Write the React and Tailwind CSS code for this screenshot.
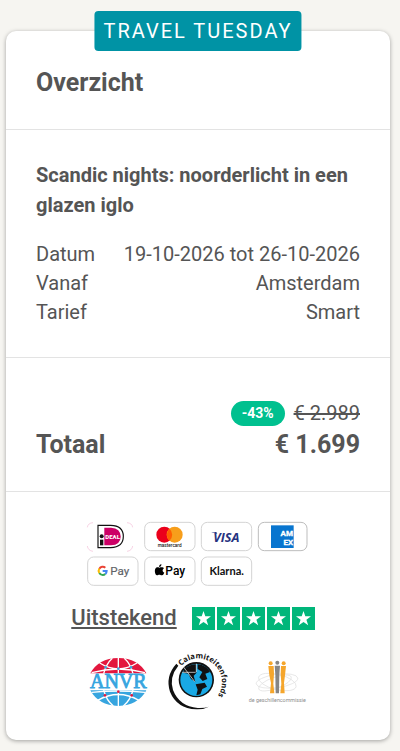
const payText = { fontFamily: 'Roboto, sans-serif' };

function Card({ viewBox, label, children }) {
  return (
    <svg viewBox={viewBox} role="img" aria-label={label} className="block h-[29px] w-[51px] overflow-visible">
      {children}
    </svg>
  );
}

function CardFrame({ x, y, width = 151, stroke = '#d4d4d4' }) {
  return <rect x={x} y={y} width={width} height="85" rx="18" fill="#fff" stroke={stroke} strokeWidth="3" />;
}

function PaymentMethods() {
  return (
    <div className="grid grid-cols-[repeat(4,51px)] justify-center gap-1.5">
      <Card viewBox="21 21 153 87" label="iDEAL">
        <g fill="none" stroke="#f3bdd6" strokeWidth="2">
          <path d="M22 37Q24 24 39 23M141 23Q156 24 158 37M22 93Q24 107 39 109M141 109Q156 107 158 93" />
        </g>
        <path d="M54 31H92Q130 32 130 64Q130 97 92 98H54Z" fill="#fff" stroke="#111" strokeWidth="3.5" />
        <path d="M73 38H93Q122 40 122 65Q122 89 93 91H73Z" fill="#cc0066" />
        <circle cx="65" cy="64" r="6" fill="#111" />
        <path d="M60 74H70V91H60Z" fill="#111" />
        <text x="76" y="71" fontSize="18" fontWeight="800" fill="#fff" style={payText}>DEAL</text>
      </Card>
      <Card viewBox="192 21 153 87" label="Mastercard">
        <CardFrame x="194" y="22" />
        <circle cx="253" cy="59" r="24" fill="#eb001b" />
        <circle cx="284" cy="59" r="24" fill="#f79e1b" />
        <path d="M268.500 41A24 24 0 0 1 268.500 77A24 24 0 0 1 268.500 41Z" fill="#ff5f00" />
        <text x="269" y="95" fontSize="14" fontWeight="500" textAnchor="middle" fill="#222" style={payText}>mastercard</text>
      </Card>
      <Card viewBox="18 21 153 87" label="Visa">
        <CardFrame x="19" y="22" />
        <text x="94" y="80" fontSize="38" fontWeight="700" fontStyle="italic" textAnchor="middle" fill="#26337f" style={{ fontFamily: '"Open Sans", sans-serif' }}>VISA</text>
        <path d="M50 51H64L67 57Q60 52 50 52Z" fill="#26337f" />
      </Card>
      <Card viewBox="187 21 153 87" label="American Express">
        <CardFrame x="188" y="22" width={146} stroke="#bdbdbd" />
        <path d="M226 31H294V99H226Z" fill="#0875cf" />
        <g fill="#fff" stroke="#fff" strokeWidth="1" fontSize="24" fontWeight="700" style={payText}>
          <text x="292" y="62" textAnchor="end">AM</text>
          <text x="292" y="89" textAnchor="end">EX</text>
        </g>
      </Card>
      <Card viewBox="21 125 153 87" label="Google Pay">
        <CardFrame x="23" y="125" />
        <g fill="none" strokeWidth="6">
          <path d="M76 157A12 12 0 0 0 58 160" stroke="#ea4335" />
          <path d="M58 160A12 12 0 0 0 58 173" stroke="#fbbc04" />
          <path d="M58 173A12 12 0 0 0 76 176" stroke="#34a853" />
          <path d="M76 176Q80 172 80 167H68" stroke="#4285f4" />
        </g>
        <text x="91" y="179" fontSize="35" fill="#5f6368" stroke="#5f6368" strokeWidth="0.5" style={payText}>Pay</text>
      </Card>
      <Card viewBox="192 125 153 87" label="Apple Pay">
        <CardFrame x="194" y="125" />
        <path d="M238 157C242 157 243 155 247 156Q250 156 252 159C246 163 247 170 253 172Q250 180 245 180C242 180 241 178 238 178C235 178 234 180 231 180C225 178 223 166 226 160C229 155 234 155 238 157ZM237 155Q237 147 244 146Q245 154 237 155Z" fill="#000" />
        <text x="256" y="179" fontSize="36" fontWeight="500" fill="#000" style={payText}>Pay</text>
      </Card>
      <Card viewBox="18 125 153 87" label="Klarna">
        <CardFrame x="19" y="125" />
        <text x="95" y="180" fontSize="33" fontWeight="700" textAnchor="middle" fill="#111" style={{ fontFamily: 'Lato, sans-serif' }}>Klarna.</text>
      </Card>
    </div>
  );
}

function Star() {
  return (
    <svg viewBox="0 0 23 23" className="size-[23px] bg-[#00b67a]" aria-hidden="true">
      <path d="M11.500 4L13.300 9.300H19L14.400 12.700L16.200 18.300L11.500 14.900L6.800 18.300L8.600 12.700L4 9.300H9.700Z" fill="#fff" />
    </svg>
  );
}

function AnvrLogo() {
  return (
    <svg viewBox="27 21 180 168" className="h-14 w-[60px] overflow-visible" role="img" aria-label="ANVR">
      <path d="M34 79Q58 34 118 33Q178 34 202 79Z" fill="#e3173e" />
      <path d="M34 130H202Q178 175 118 177Q58 175 34 130Z" fill="#37a5df" />
      <g fill="none" stroke="#fff" strokeWidth="4">
        <path d="M118 33V80M118 130V177M100 34Q82 50 74 80M136 34Q154 50 162 80M74 129Q82 160 103 177M162 129Q154 160 133 177" />
        <path d="M62 48Q118 83 174 48M38 77Q118 55 198 77M56 160Q118 125 180 160M38 136Q118 128 198 136" />
      </g>
      <g fill="#37a5df">
        <circle cx="118" cy="65" r="4" /><circle cx="80" cy="61" r="4" /><circle cx="156" cy="61" r="4" />
      </g>
      <g fill="#e3173e">
        <circle cx="118" cy="134" r="4" /><circle cx="78" cy="145" r="4" /><circle cx="158" cy="145" r="4" />
      </g>
      <text x="118" y="123" fontSize="60" textAnchor="middle" fill="#37a5df" stroke="#37a5df" strokeWidth="2.5" style={{ fontFamily: '"Liberation Serif", serif' }}>ANVR</text>
    </svg>
  );
}

function CalamityFundLogo() {
  return (
    <svg viewBox="27 21 180 168" className="h-14 w-[60px] overflow-visible" role="img" aria-label="Calamiteitenfonds">
      <defs>
        <path id="fund-arc" d="M66 57A71 71 0 1 1 155 166" />
      </defs>
      <path d="M52 50L58 56Q30 90 42 129Q61 178 116 183Q136 184 150 179Q133 188 112 187Q53 184 33 134Q18 88 52 50Z" fill="#111" />
      <circle cx="112" cy="98" r="53" fill="#111" />
      <circle cx="112" cy="99" r="48" fill="#19a9e5" />
      <path d="M76 66Q93 51 112 52V78L104 86L109 105L96 96L88 80L72 77Z" fill="#111" />
      <path d="M116 52Q143 55 153 75L139 80L145 96L131 102L121 91L130 75L116 66Z" fill="#111" />
      <path d="M110 112L137 107L144 119L130 126L124 142L112 145L116 128Z" fill="#111" />
      <path d="M72 58L107 104M70 76H110M112 50V75" stroke="#fff" strokeWidth="2" />
      <text fontSize="23" fontWeight="700" fill="#111" style={{ fontFamily: '"Open Sans", sans-serif' }}>
        <textPath href="#fund-arc">Calamiteitenfonds</textPath>
      </text>
    </svg>
  );
}

function DisputeLogo() {
  return (
    <svg viewBox="24 21 180 168" className="h-14 w-[60px] overflow-visible" role="img" aria-label="de geschillencommissie">
      <g fill="none" stroke="#dedede" strokeWidth="2">
        <ellipse cx="111" cy="102" rx="63" ry="20" transform="rotate(-8 111 102)" />
        <ellipse cx="112" cy="105" rx="58" ry="23" transform="rotate(14 112 105)" />
        <ellipse cx="105" cy="108" rx="52" ry="17" transform="rotate(-20 105 108)" />
      </g>
      <g fill="#f5a62c">
        <circle cx="92" cy="49" r="6" />
        <path d="M85 57H101L102 80L100 110L103 139H90L93 108L88 85Z" />
        <circle cx="131" cy="49" r="6" />
        <path d="M123 57H138L135 85L132 108L134 139H121L124 110L122 80Z" />
      </g>
      <g fill="#858585">
        <circle cx="112" cy="47" r="6" />
        <path d="M104 56H120L118 83L117 139H107L106 83Z" />
      </g>
      <text x="112" y="164" fontSize="16" textAnchor="middle" fill="#8d8d8d" style={payText}>de geschillencommissie</text>
    </svg>
  );
}

const details = [
  ['Datum', '19-10-2026 tot 26-10-2026'],
  ['Vanaf', 'Amsterdam'],
  ['Tarief', 'Smart'],
];

export default function App() {
  return (
    <main className="min-h-screen bg-[#f6f5f1] pt-[31px] pr-2.5 pb-[11px] pl-1.5 font-[Roboto,sans-serif] text-xl text-[#555]">
      <article className="relative rounded-[10px] bg-white shadow-[0_1px_4px_rgba(0,0,0,0.35)]">
        <div className="absolute -top-5 left-1/2 -translate-x-1/2 rounded bg-[#0093a5] px-[9px] py-[5px] leading-[30px] tracking-widest whitespace-nowrap text-white">
          TRAVEL TUESDAY
        </div>

        <header className="border-b border-[#e3e3e3] px-[30px] pt-9 pb-[30px]">
          <h1 className="text-[25px] leading-8 font-bold">Overzicht</h1>
        </header>

        <section className="border-b border-[#e3e3e3] px-[30px] pt-[30px] pb-[30px]">
          <h2 className="leading-[30px] font-bold">Scandic nights: noorderlicht in een glazen iglo</h2>
          <dl className="mt-5">
            {details.map(([label, value]) => (
              <div key={label} className="flex justify-between leading-[29px]">
                <dt>{label}</dt>
                <dd>{value}</dd>
              </div>
            ))}
          </dl>
        </section>

        <section className="border-b border-[#e3e3e3] px-[30px] pt-10 pb-[30px]">
          <div className="flex items-center justify-end gap-[9px] leading-[30px]">
            <span className="rounded-full bg-[#00c08f] px-[11px] text-sm leading-[25px] font-bold text-white">-43%</span>
            <s>€ 2.989</s>
          </div>
          <div className="mt-px flex justify-between text-[25px] leading-8 font-bold">
            <span>Totaal</span>
            <span>€ 1.699</span>
          </div>
        </section>

        <footer className="pt-[30px] pb-[30px]">
          <PaymentMethods />
          <div className="mt-4 flex items-center justify-center gap-[15px] pr-2.5">
            <a href="#reviews" className="text-[22px] leading-8 font-medium underline">Uitstekend</a>
            <div className="flex gap-0.5" role="img" aria-label="5 van 5 sterren">
              <Star /><Star /><Star /><Star /><Star />
            </div>
          </div>
          <div className="mt-5 flex justify-center gap-5">
            <AnvrLogo />
            <CalamityFundLogo />
            <DisputeLogo />
          </div>
        </footer>
      </article>
    </main>
  );
}
